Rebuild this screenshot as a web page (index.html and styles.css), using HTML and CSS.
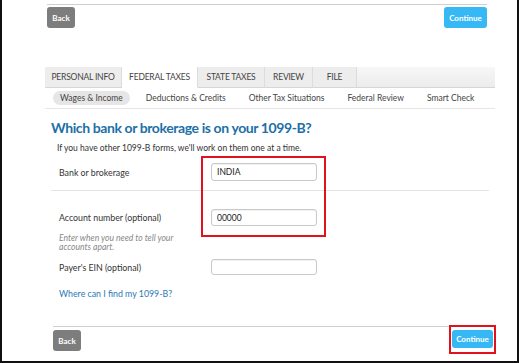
FILE: index.html
```html
<!DOCTYPE html>
<html lang="en">
<head>
    <meta charset="UTF-8">
    <title>Which bank or brokerage is on your 1099-B?</title>
    <link rel="stylesheet" href="styles.css">
</head>
<body>
    <div class="frame">
        <div class="top-actions">
            <button class="btn btn-back">Back</button>
            <button class="btn btn-continue">Continue</button>
        </div>

        <nav class="tabs">
            <div class="tab tab-personal">PERSONAL INFO</div>
            <div class="tab tab-federal active">FEDERAL TAXES</div>
            <div class="tab tab-state">STATE TAXES</div>
            <div class="tab tab-review">REVIEW</div>
            <div class="tab tab-file">FILE</div>
            <div class="tab tab-rest"></div>
        </nav>

        <nav class="subnav">
            <span class="sub-item current">Wages &amp; Income</span>
            <span class="sub-item">Deductions &amp; Credits</span>
            <span class="sub-item">Other Tax Situations</span>
            <span class="sub-item">Federal Review</span>
            <span class="sub-item">Smart Check</span>
        </nav>

        <main class="content">
            <h1>Which bank or brokerage is on your 1099-B?</h1>
            <p class="intro">If you have other 1099-B forms, we'll work on them one at a time.</p>

            <div class="form">
                <div class="row row-bank">
                    <label for="bank">Bank or brokerage</label>
                    <input type="text" id="bank" value="INDIA">
                </div>
                <div class="row row-account">
                    <label for="account">Account number (optional)</label>
                    <input type="text" id="account" value="00000">
                </div>
                <p class="hint">Enter when you need to tell your<br>accounts apart.</p>
                <div class="row row-ein">
                    <label for="ein">Payer's EIN (optional)</label>
                    <input type="text" id="ein" value="">
                </div>
                <div class="highlight"></div>
            </div>

            <a class="help-link" href="#">Where can I find my 1099-B?</a>
        </main>

        <div class="bottom-actions">
            <button class="btn btn-back">Back</button>
            <div class="continue-wrap">
                <button class="btn btn-continue">Continue</button>
            </div>
        </div>
    </div>
</body>
</html>
```

FILE: styles.css
```css
* {
    margin: 0;
    padding: 0;
    box-sizing: border-box;
}

body {
    font-family: Lato, "Open Sans", sans-serif;
    color: #333;
    background: #fff;
}

.frame {
    width: 519px;
    height: 363px;
    border-left: 2px solid #111;
    border-right: 2px solid #111;
    border-bottom: 2px solid #111;
    overflow: hidden;
}

.btn {
    border: none;
    border-radius: 3px;
    color: #fff;
    font-family: inherit;
    font-size: 8px;
    font-weight: 700;
    height: 21px;
}

.btn-back {
    background: #7d7d7d;
    width: 28px;
}

.btn-continue {
    background: #35b8f4;
    width: 43px;
}

.top-actions {
    display: flex;
    justify-content: space-between;
    margin: 4px 0 0 45px;
    width: 440px;
    padding-top: 2px;
    border-top: 1px solid #cfcfcf;
}

.tabs {
    display: flex;
    margin: 39px 0 0 43px;
    width: 450px;
    height: 21px;
}

.tab {
    background: #ededed;
    border-bottom: 1px solid #d6d6d6;
    border-right: 1px solid #dcdcdc;
    font-size: 8.5px;
    color: #444;
    display: flex;
    align-items: center;
    justify-content: center;
    letter-spacing: -0.2px;
}

.tab.active {
    background: #fff;
    border-bottom-color: #fff;
}

.tab-personal { width: 77px; }
.tab-federal { width: 76px; }
.tab-state { width: 67px; }
.tab-review { width: 48px; }
.tab-file { width: 44px; }
.tab-rest {
    flex: 1;
    border-right: none;
    background: linear-gradient(#f7f7f7, #ececec);
}

.subnav {
    display: flex;
    align-items: center;
    margin-left: 43px;
    width: 450px;
    height: 21px;
    padding-left: 8px;
    border-bottom: 1px solid #e6e6e6;
    font-size: 8.5px;
    color: #444;
    white-space: nowrap;
}

.sub-item {
    flex-shrink: 0;
    margin-right: 23px;
}

.sub-item.current {
    background: #e6e6e6;
    border-radius: 7px;
    padding: 2px 7px;
    margin-right: 16px;
}

.content {
    margin-left: 49px;
    width: 438px;
}

h1 {
    font-size: 14px;
    font-weight: 700;
    color: #1d6fa8;
    margin-top: 9px;
    line-height: 20px;
    letter-spacing: -0.4px;
}

.intro {
    font-size: 8.5px;
    color: #333;
    margin: 5px 0 0 6px;
}

.form {
    position: relative;
    margin-top: 10px;
}

.row {
    display: grid;
    grid-template-columns: 152px 106px;
    align-items: center;
    padding-left: 8px;
}

.row label {
    font-size: 8.8px;
    color: #333;
}

.row input {
    height: 18px;
    border: 1px solid #c9c9c9;
    border-radius: 3px;
    padding-left: 5px;
    font-family: inherit;
    font-size: 8.5px;
    color: #222;
    box-shadow: inset 0 1px 1px rgba(0, 0, 0, 0.06);
}

.row-bank {
    padding-bottom: 9px;
    border-bottom: 1px solid #e4e4e4;
}

.row-account {
    margin-top: 18px;
}

.row-account input {
    height: 17px;
}

.row-ein {
    margin-top: 8px;
}

.row-ein input {
    height: 16px;
}

.hint {
    font-size: 8.6px;
    font-style: italic;
    color: #888;
    line-height: 8.5px;
    margin: 8px 0 0 8px;
}

.highlight {
    position: absolute;
    left: 150px;
    top: -7px;
    width: 125px;
    height: 81px;
    border: 2px solid #e0121d;
}

.help-link {
    display: block;
    margin: 13px 0 0 8px;
    font-size: 8.8px;
    color: #2a79b5;
    text-decoration: none;
}

.bottom-actions {
    display: flex;
    justify-content: space-between;
    align-items: flex-start;
    margin: 27px 0 0 51px;
    width: 443px;
    border-top: 1px solid #cfcfcf;
}

.bottom-actions .btn-back {
    margin-top: 3px;
}

.continue-wrap {
    border: 2px solid #e0121d;
    padding: 3px 1px 4px 1px;
    margin-top: -2px;
}

.continue-wrap .btn-continue {
    display: block;
    height: 18px;
    width: 41px;
}
```
